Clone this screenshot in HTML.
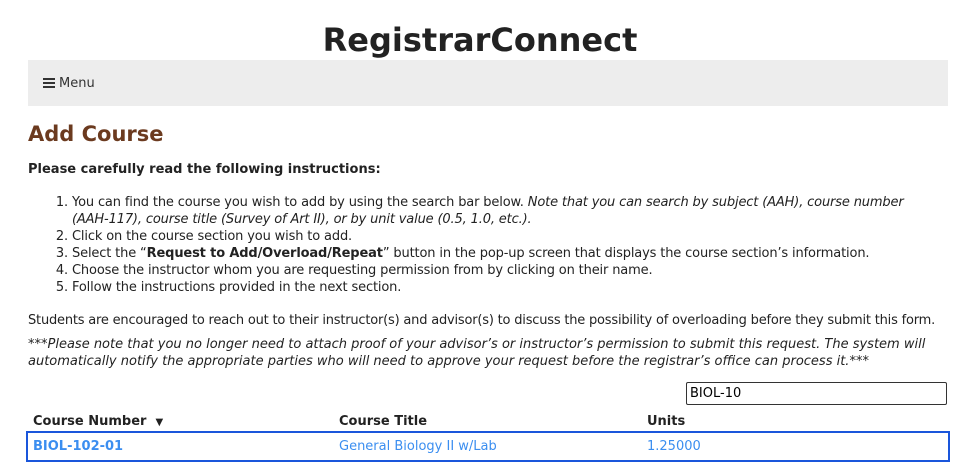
<!DOCTYPE html>
<html><head><style>
body{margin:0;width:960px;height:464px;overflow:hidden;background:#fff;font-family:"DejaVu Sans",sans-serif;color:#222;font-size:13px;}
h1{position:absolute;top:20px;left:0;width:960px;text-align:center;margin:0;font-size:32px;line-height:40px;font-weight:bold;color:#222;}
.menu{position:absolute;left:28px;top:60px;width:920px;height:46px;background:#ededed;}
.menu span{position:absolute;left:15px;top:16px;font-size:13px;color:#333;}
.ham{display:inline-block;width:12px;height:10px;border-top:2px solid #333;border-bottom:2px solid #333;position:relative;vertical-align:-1px;margin-right:4px;box-sizing:border-box}
.ham:after{content:"";position:absolute;left:0;right:0;top:2px;border-top:2px solid #333}
h2{position:absolute;left:28px;top:120px;margin:0;font-size:21px;color:#6b3a1f;line-height:28px}
.b{position:absolute;left:28px;top:162px;font-weight:bold;}
ol{position:absolute;left:28px;top:194px;margin:0;padding-left:44px;width:872px;line-height:17px;letter-spacing:-0.15px}
p{margin:0;position:absolute;left:28px;width:925px;line-height:17px}
input{position:absolute;left:686px;top:382px;width:261px;height:23px;box-sizing:border-box;border:1px solid #333;border-radius:2px;font:13px "DejaVu Sans",sans-serif;padding:2px 3px}
.th{position:absolute;top:414px;font-weight:bold;}
.row{position:absolute;left:26px;top:431px;width:924px;height:31px;border:2px solid #1a56db;box-sizing:border-box}
.td{position:absolute;top:439px;color:#3b8ef0}
</style></head><body>
<h1>RegistrarConnect</h1>
<div class="menu"><span><i class="ham"></i>Menu</span></div>
<h2>Add Course</h2>
<div class="b">Please carefully read the following instructions:</div>
<ol>
<li>You can find the course you wish to add by using the search bar below. <i>Note that you can search by subject (AAH), course number (AAH-117), course title (Survey of Art II), or by unit value (0.5, 1.0, etc.).</i></li>
<li>Click on the course section you wish to add.</li>
<li>Select the “<b>Request to Add/Overload/Repeat</b>” button in the pop-up screen that displays the course section’s information.</li>
<li>Choose the instructor whom you are requesting permission from by clicking on their name.</li>
<li>Follow the instructions provided in the next section.</li>
</ol>
<p style="top:312px;white-space:nowrap;letter-spacing:-0.2px">Students are encouraged to reach out to their instructor(s) and advisor(s) to discuss the possibility of overloading before they submit this form.</p>
<p style="top:336px"><i>***Please note that you no longer need to attach proof of your advisor’s or instructor’s permission to submit this request. The system will automatically notify the appropriate parties who will need to approve your request before the registrar’s office can process it.***</i></p>
<input value="BIOL-10">
<div class="th" style="left:33px">Course Number &nbsp;<span style="font-size:10px">▼</span></div>
<div class="th" style="left:339px">Course Title</div>
<div class="th" style="left:647px">Units</div>
<div class="row"></div>
<div class="td" style="left:33px;font-weight:bold">BIOL-102-01</div>
<div class="td" style="left:339px">General Biology II w/Lab</div>
<div class="td" style="left:647px">1.25000</div>
</body></html>
